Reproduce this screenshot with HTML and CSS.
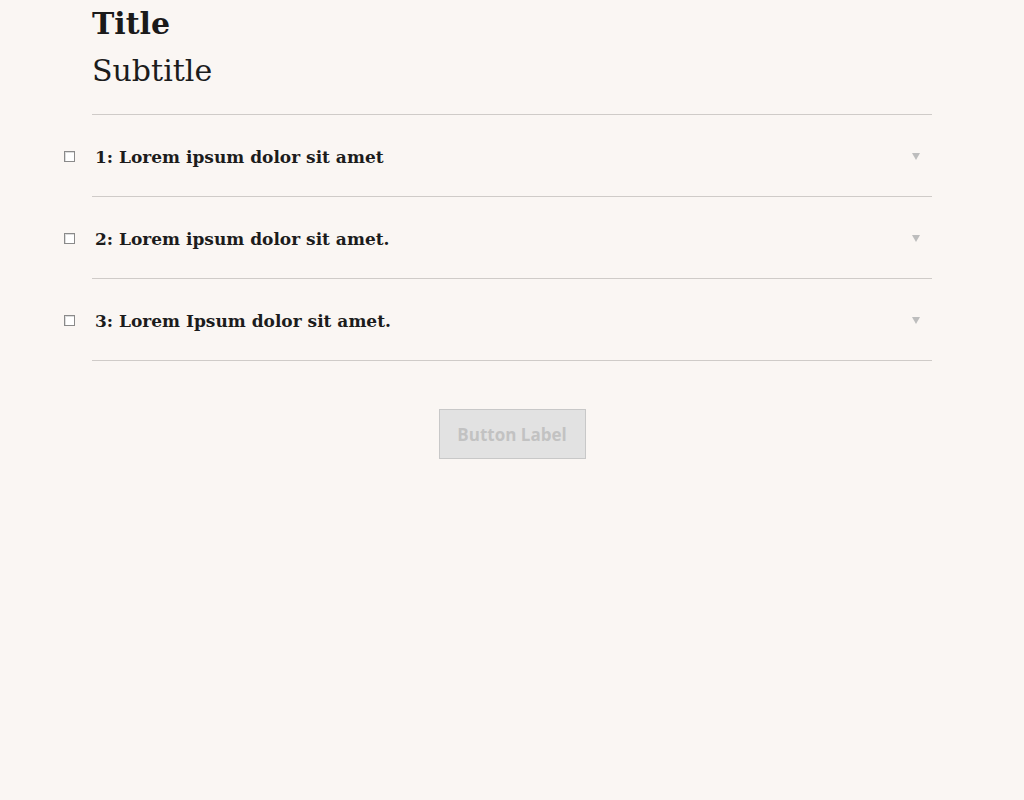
FILE: index.html
```html
<!DOCTYPE html>
<html>
<head>
<meta charset="utf-8">
<link rel="stylesheet" href="styles.css">
</head>
<body>
<main class="page">
  <header class="head">
    <h1 class="title">Title</h1>
    <h2 class="subtitle">Subtitle</h2>
  </header>
  <ul class="list">
    <li class="row"><span class="check"></span><span class="label">1: Lorem ipsum dolor sit amet</span><span class="arrow"></span></li>
    <li class="row"><span class="check"></span><span class="label">2: Lorem ipsum dolor sit amet.</span><span class="arrow"></span></li>
    <li class="row"><span class="check"></span><span class="label">3: Lorem Ipsum dolor sit amet.</span><span class="arrow"></span></li>
  </ul>
  <div class="actions">
    <button class="btn" disabled>Button Label</button>
  </div>
</main>
</body>
</html>
```
FILE: styles.css
```css
html, body {
  margin: 0;
  padding: 0;
  background: #faf6f3;
}
body {
  font-family: "DejaVu Serif", "Liberation Serif", serif;
  color: #1c1c1c;
}
.page {
  width: 840px;
  margin: 0 auto;
}
.head {
  padding-top: 4px;
  padding-bottom: 17px;
  border-bottom: 1px solid #cfcbc8;
}
.title {
  margin: 0;
  font-size: 30px;
  line-height: 40px;
  font-weight: 700;
  color: #1a1a1a;
}
.subtitle {
  margin: 0;
  font-size: 30px;
  line-height: 53px;
  font-weight: 400;
}
.list {
  list-style: none;
  margin: 0;
  padding: 0;
}
.row {
  display: flex;
  align-items: center;
  height: 81px;
  border-bottom: 1px solid #cfcbc8;
}
.check {
  width: 9px;
  height: 9px;
  border: 1px solid #8a8a8a;
  background: #fff;
  margin-left: -28px;
  margin-right: 20px;
  margin-top: 2px;
  box-shadow: inset 1px 1px 0 #ddd;
}
.label {
  flex: 1;
  font-size: 17px;
  font-weight: 700;
  margin-top: 3px;
}
.arrow {
  width: 0;
  height: 0;
  border-left: 4px solid transparent;
  border-right: 4px solid transparent;
  border-top: 7px solid #bdbdbd;
  margin-right: 12px;
  margin-top: 2px;
}
.actions {
  display: flex;
  justify-content: center;
  padding-top: 48px;
}
.btn {
  width: 147px;
  height: 50px;
  background: #e2e2e2;
  border: 1px solid #c8c8c8;
  color: #c2c2c2;
  font-family: "Open Sans", sans-serif;
  font-weight: 700;
  font-size: 17px;
  padding: 0;
}
```
